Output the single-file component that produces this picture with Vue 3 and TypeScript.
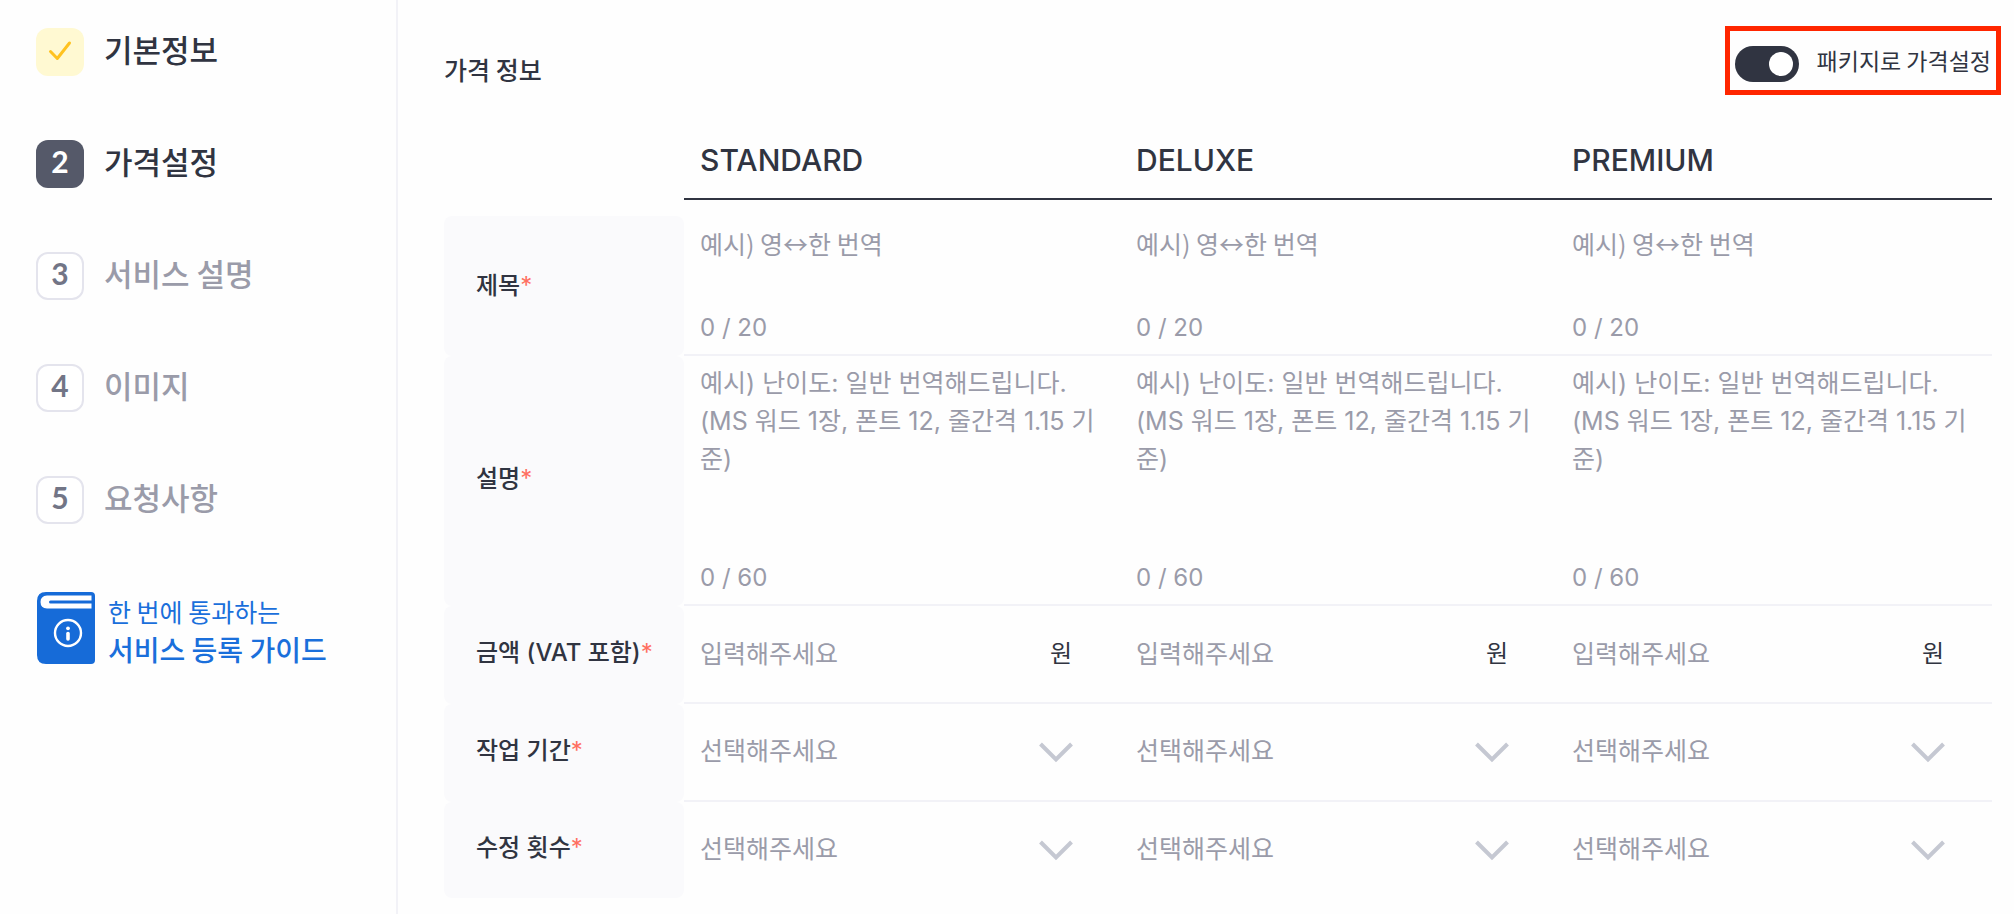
<script setup lang="ts">
import { reactive, ref } from 'vue'

interface Step {
  no: number
  label: string
  state: 'done' | 'current' | 'todo'
}

interface Plan {
  key: string
  name: string
  title: string
  description: string
  price: string
  period: string
  revisions: string
}

const steps: Step[] = [
  { no: 1, label: '기본정보', state: 'done' },
  { no: 2, label: '가격설정', state: 'current' },
  { no: 3, label: '서비스 설명', state: 'todo' },
  { no: 4, label: '이미지', state: 'todo' },
  { no: 5, label: '요청사항', state: 'todo' },
]

const makePlan = (key: string, name: string): Plan => ({
  key,
  name,
  title: '',
  description: '',
  price: '',
  period: '',
  revisions: '',
})

const plans = reactive<Plan[]>([
  makePlan('standard', 'STANDARD'),
  makePlan('deluxe', 'DELUXE'),
  makePlan('premium', 'PREMIUM'),
])

const selectRows: { key: 'period' | 'revisions'; label: string }[] = [
  { key: 'period', label: '작업 기간' },
  { key: 'revisions', label: '수정 횟수' },
]

const descriptionHint = '예시) 난이도: 일반 번역해드립니다.\n(MS 워드 1장, 폰트 12, 줄간격 1.15 기준)'
const packaged = ref(true)
</script>

<template>
  <div class="page">
    <aside class="sidebar">
      <nav>
        <ol class="steps">
          <li v-for="step in steps" :key="step.no">
            <a href="#" class="step" :class="step.state">
              <span class="badge">
                <svg v-if="step.state === 'done'" width="24" height="24" viewBox="0 0 24 24" aria-hidden="true">
                  <path d="M2.500 12.500 9.300 19.500 21.500 4" />
                </svg>
                <template v-else>{{ step.no }}</template>
              </span>
              <span class="step-label">{{ step.label }}</span>
            </a>
          </li>
        </ol>
      </nav>
      <a href="#" class="guide">
        <svg width="58" height="72" viewBox="0 0 58 72" aria-hidden="true">
          <path fill="#166bd8" d="M9 0H54Q58 0 58 4V68Q58 72 54 72H9Q0 72 0 63V9Q0 0 9 0Z" />
          <path fill="#fff" d="M10 3.500H54.500V8.500H13.500Q12 8.500 12 10T13.500 11.500H54.500V16.500H10Q3.500 16 3.500 10T10 3.500Z" />
          <circle cx="31" cy="41" r="13" fill="none" stroke="#fff" stroke-width="2.400" />
          <circle cx="31" cy="36.300" r="1.900" fill="#fff" />
          <path d="M31 41.500V47" fill="none" stroke="#fff" stroke-width="3.600" stroke-linecap="round" />
        </svg>
        <span class="guide-text">
          <span>한 번에 통과하는</span>
          <strong>서비스 등록 가이드</strong>
        </span>
      </a>
    </aside>

    <main class="content">
      <header class="content-head">
        <h1>가격 정보</h1>
        <label class="package">
          <input v-model="packaged" type="checkbox" role="switch" />
          <span>패키지로 가격설정</span>
        </label>
      </header>

      <table class="plans">
        <thead>
          <tr>
            <td class="corner"></td>
            <th v-for="plan in plans" :key="plan.key" scope="col">{{ plan.name }}</th>
          </tr>
        </thead>
        <tbody>
          <tr class="row-title">
            <th scope="row">제목<em>*</em></th>
            <td v-for="plan in plans" :key="plan.key">
              <textarea v-model="plan.title" maxlength="20" placeholder="예시) 영↔한 번역" :aria-label="`${plan.name} 제목`"></textarea>
              <p class="count">{{ plan.title.length }} / 20</p>
            </td>
          </tr>
          <tr class="row-desc">
            <th scope="row">설명<em>*</em></th>
            <td v-for="plan in plans" :key="plan.key">
              <textarea v-model="plan.description" maxlength="60" :placeholder="descriptionHint" :aria-label="`${plan.name} 설명`"></textarea>
              <p class="count">{{ plan.description.length }} / 60</p>
            </td>
          </tr>
          <tr class="row-line">
            <th scope="row">금액 (VAT 포함)<em>*</em></th>
            <td v-for="plan in plans" :key="plan.key">
              <label class="price">
                <input v-model="plan.price" type="text" inputmode="numeric" placeholder="입력해주세요" :aria-label="`${plan.name} 금액`" />
                <span class="unit">원</span>
              </label>
            </td>
          </tr>
          <tr v-for="row in selectRows" :key="row.key" class="row-line">
            <th scope="row">{{ row.label }}<em>*</em></th>
            <td v-for="plan in plans" :key="plan.key">
              <div class="picker">
                <select v-model="plan[row.key]" :aria-label="`${plan.name} ${row.label}`">
                  <option value="">선택해주세요</option>
                  <option v-for="n in 5" :key="n" :value="String(n)">{{ n }}{{ row.key === 'period' ? '일' : '회' }}</option>
                </select>
                <svg width="36" height="24" viewBox="0 0 36 24" aria-hidden="true">
                  <path d="M2.500 5 18 20.500 33.500 5" />
                </svg>
              </div>
            </td>
          </tr>
        </tbody>
      </table>
    </main>
  </div>
</template>

<style>
body {
  margin: 0;
  background: #fefefe;
}
</style>

<style scoped>
.page {
  display: flex;
  min-height: 100vh;
  color: #303441;
  font-family: Inter, 'Noto Sans CJK KR', sans-serif;
  font-size: 24px;
}

.page,
.page *,
.page *::before {
  box-sizing: border-box;
}

a {
  color: inherit;
  text-decoration: none;
}

.sidebar {
  flex: 0 0 398px;
  padding: 28px 0 0 36px;
  border-right: 2px solid #f2f2f7;
  font-family: 'Noto Sans CJK KR', sans-serif;
}

.steps {
  display: grid;
  gap: 64px;
  margin: 0;
  padding: 0;
  list-style: none;
}

.step {
  display: flex;
  gap: 20px;
  height: 48px;
}

.badge {
  display: grid;
  place-items: center;
  width: 48px;
  height: 48px;
  padding-bottom: 6px;
  border-radius: 12px;
  font: 700 30px/36px Lato, sans-serif;
}

.badge svg {
  margin-top: 4px;
}

.badge path {
  fill: none;
  stroke: #ffc21f;
  stroke-width: 3;
  stroke-linecap: round;
  stroke-linejoin: round;
}

.done .badge {
  background: #fff9d2;
}

.current .badge {
  background: #555969;
  color: #fff;
}

.todo .badge {
  border: 2px solid #e4e4ed;
  background: #fff;
  color: #727586;
}

.step-label {
  font-size: 31px;
  font-weight: 500;
  line-height: 42px;
}

.todo .step-label {
  color: #9a9ba9;
}

.guide {
  display: flex;
  gap: 13px;
  margin: 64px 0 0 1px;
  padding-top: 4px;
  color: #1a6fdb;
}

.guide svg {
  flex: none;
}

.guide-text {
  display: grid;
  align-content: start;
  font-size: 25px;
  line-height: 38px;
}

.guide-text strong {
  font-size: 28px;
  font-weight: 500;
}

.content {
  flex: 1;
  min-width: 0;
  padding: 26px 13px 16px 46px;
}

.content-head {
  display: flex;
  align-items: flex-end;
  justify-content: space-between;
}

h1 {
  margin: 0;
  font-size: 25px;
  font-weight: 500;
  line-height: 52px;
  font-family: 'Noto Sans CJK KR', sans-serif;
}

.package {
  display: flex;
  gap: 18px;
  height: 69px;
  padding: 15px 5px 0;
  border: 5px solid #ff2600;
  font-family: 'Noto Sans CJK KR', sans-serif;
  font-size: 23px;
  line-height: 28px;
}

.package input {
  appearance: none;
  display: flex;
  align-items: center;
  width: 64px;
  height: 36px;
  margin: 0;
  padding: 0 6px;
  border-radius: 18px;
  background: #c5c8d2;
}

.package input::before {
  content: '';
  width: 24px;
  height: 24px;
  border-radius: 50%;
  background: #fff;
}

.package input:checked {
  justify-content: flex-end;
  background: #303441;
}

.plans {
  width: calc(100% - 9px);
  margin-top: 25px;
  border-spacing: 0;
  table-layout: fixed;
}

.corner {
  width: 240px;
}

thead th {
  height: 80px;
  padding: 2px 16px 0;
  border-bottom: 2px solid #303441;
  font-size: 30px;
  font-weight: 500;
  text-align: left;
}

tbody::before {
  content: '';
  display: table-row;
  height: 16px;
}

tbody th {
  padding: 0 0 10px 32px;
  border-radius: 8px;
  background: #fafafc;
  font-size: 24px;
  font-weight: 500;
  text-align: left;
  white-space: nowrap;
}

.row-title th {
  padding-bottom: 6px;
}

tbody em {
  color: #ff6f61;
  font-style: normal;
  font-weight: 400;
}

tbody td {
  padding: 0 16px;
  border-bottom: 2px solid #f2f2f7;
  vertical-align: top;
}

tbody tr:last-child td {
  border-bottom: 0;
}

textarea,
.price input,
select {
  width: 100%;
  margin: 0;
  padding: 0;
  border: 0;
  outline: 0;
  background: transparent;
  color: #303441;
  font: 400 25px/38px Inter, 'Noto Sans CJK KR', sans-serif;
}

textarea {
  display: block;
  height: 78px;
  overflow: hidden;
  resize: none;
}

textarea::placeholder,
.price input::placeholder {
  color: #9a9ba9;
  opacity: 1;
}

.row-title td,
.row-desc td {
  padding-top: 8px;
}

.row-title textarea {
  font-family: 'Noto Sans CJK KR', sans-serif;
}

.row-desc textarea {
  height: 188px;
}

.count {
  margin: 0;
  color: #9a9ba9;
  font-size: 24px;
  line-height: 52px;
}

.row-line td {
  height: 98px;
}

.row-line:last-child td {
  height: 96px;
}

.price {
  display: flex;
  align-items: center;
  height: 96px;
  padding-right: 32px;
}

.price input {
  flex: 1;
  min-width: 0;
}

.unit {
  padding-bottom: 6px;
}

.picker {
  display: grid;
  align-items: center;
  height: 94px;
  padding-right: 30px;
}

.picker > * {
  grid-area: 1 / 1;
}

select {
  appearance: none;
  color: #9a9ba9;
}

.picker svg {
  justify-self: end;
  pointer-events: none;
}

.picker path {
  fill: none;
  stroke: #c5c8d2;
  stroke-width: 4;
}
</style>
